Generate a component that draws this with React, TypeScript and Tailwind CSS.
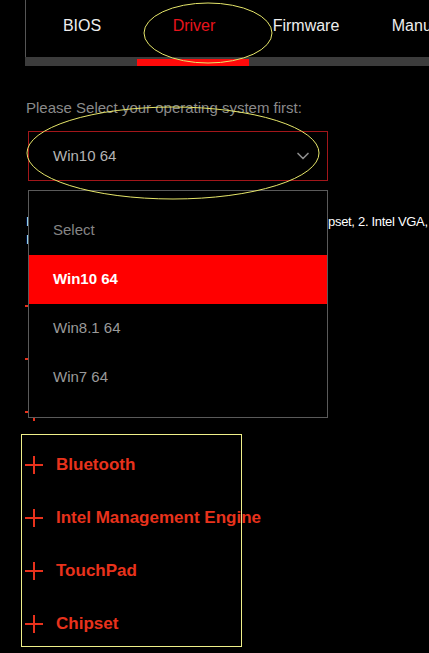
import { ChevronDown } from 'lucide-react'

const tabs = [
  { label: 'BIOS', active: false },
  { label: 'Driver', active: true },
  { label: 'Firmware', active: false },
  { label: 'Manual', active: false },
]

const osOptions = [
  { label: 'Select', selected: false, muted: true },
  { label: 'Win10 64', selected: true, muted: false },
  { label: 'Win8.1 64', selected: false, muted: false },
  { label: 'Win7 64', selected: false, muted: false },
]

const drivers = ['Intel VGA', 'Audio', 'LAN', 'Bluetooth', 'Intel Management Engine', 'TouchPad', 'Chipset']

function Plus() {
  return (
    <svg width="18" height="18" viewBox="0 0 18 18" className="shrink-0">
      <path d="M0 9H18M9 0V18" stroke="#e8321c" strokeWidth="2" />
    </svg>
  )
}

export default function App() {
  return (
    <div className="relative w-[429px] h-[653px] overflow-hidden bg-black font-['Liberation_Sans',Arial,sans-serif]">

      {/* Tabs */}
      <div className="ml-[25px]">
        <div className="flex h-[57px] border-l border-[#555]">
          {tabs.map((t) => (
            <div
              key={t.label}
              className={`w-[112px] shrink-0 text-center pt-[16px] text-[16px] leading-[20px] ${t.active ? 'text-[#e8141c]' : 'text-[#eeeeee]'}`}
            >
              {t.label}
            </div>
          ))}
        </div>
        <div className="h-[9px] w-[420px] bg-[#3c3c3c] pt-[2px]">
          <div className="ml-[112px] w-[112px] h-[7px] bg-[#ff0a0a]" />
        </div>
      </div>

      {/* OS select */}
      <p className="mt-[32px] pl-[26px] text-[15px] leading-[20px] text-[#8a8a8a] whitespace-nowrap">
        Please Select your operating system first:
      </p>
      <div className="mt-[13px] ml-[28px] w-[300px] h-[50px] border border-[#a3161a] flex items-center justify-between pl-[24px] pr-[14px]">
        <span className="text-[15px] text-[#b4b4b4]">Win10 64</span>
        <ChevronDown size={20} strokeWidth={2} className="text-[#8c8c8c]" />
      </div>

      {/* Notes */}
      <div className="mt-[32px] ml-[26px] text-[13px] leading-[18px] tracking-[-0.3px] text-white whitespace-nowrap">
        <p>
          <span className="inline-block w-[302px] overflow-hidden align-top">Install the drivers in the following order: 1. Chi</span>pset, 2. Intel VGA,
        </p>
        <p>Intel Management Engine, 4. Audio, 5. LAN</p>
      </div>

      {/* Driver list */}
      <div className="mt-[30px]">
        {drivers.map((d) => (
          <div key={d} className="h-[53px] flex items-center gap-[13px] pl-[25px]">
            <Plus />
            <span className="text-[17px] font-bold text-[#e8321c]">{d}</span>
          </div>
        ))}
      </div>

      {/* Dropdown menu */}
      <div className="absolute left-[28px] top-[190px] w-[300px] h-[228px] bg-black border border-[#5a5a5a] pt-[15px]">
        {osOptions.map((o) => (
          <div
            key={o.label}
            className={`h-[49px] flex items-center pl-[24px] text-[15px] ${o.selected ? 'bg-[#ff0000] text-white font-bold' : o.muted ? 'text-[#858585]' : 'text-[#9a9a9a]'}`}
          >
            {o.label}
          </div>
        ))}
      </div>

      {/* Annotation marks */}
      <svg className="absolute inset-0 pointer-events-none" width="429" height="653">
        <ellipse cx="208" cy="33" rx="64" ry="30" fill="none" stroke="#e6e66a" strokeWidth="1" />
        <ellipse cx="173" cy="153" rx="146" ry="46" fill="none" stroke="#e6e66a" strokeWidth="1" />
        <rect x="21.5" y="434.5" width="220" height="212" fill="none" stroke="#f0f08a" strokeWidth="1" />
      </svg>
    </div>
  )
}
